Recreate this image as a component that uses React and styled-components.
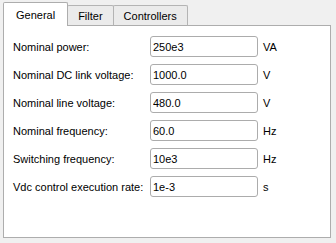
import React from 'react';
import styled, { createGlobalStyle } from 'styled-components';

const Global = createGlobalStyle`
  body {
    margin: 0;
    background: #f0f0f0;
    font-family: "Liberation Sans", Arial, sans-serif;
    font-size: 11px;
    color: #000;
  }
`;

const Page = styled.div`
  width: 336px;
  height: 243px;
  box-sizing: border-box;
  padding: 2px 5px 0 3px;
  display: flex;
  flex-direction: column;
`;

const TabBar = styled.div`
  display: flex;
  align-items: flex-end;
  height: 24px;
  margin-bottom: -1px;
  position: relative;
  z-index: 1;
`;

const Tab = styled.div`
  box-sizing: border-box;
  height: ${p => (p.$active ? '24px' : '21px')};
  padding: 0 ${p => (p.$active ? '12px' : '10px')};
  margin-left: ${p => (p.$first ? '0' : '-1px')};
  display: flex;
  align-items: center;
  border: 1px solid ${p => (p.$active ? '#adadad' : '#b4b4b4')};
  border-bottom: ${p => (p.$active ? 'none' : '1px solid #adadad')};
  border-radius: 2px 2px 0 0;
  background: ${p => (p.$active ? '#fff' : '#ebebeb')};
  padding-top: ${p => (p.$active ? '0' : '1px')};
  position: relative;
  z-index: ${p => (p.$active ? 2 : 1)};
`;

const Panel = styled.div`
  box-sizing: border-box;
  width: 328px;
  height: 213px;
  border: 1px solid #adadad;
  background: #fff;
  padding: 10px 0 0 9px;
  display: flex;
  flex-direction: column;
  gap: 7px;
`;

const Row = styled.div`
  display: grid;
  grid-template-columns: 137px 108px auto;
  align-items: center;
  height: 21px;
`;

const Label = styled.span`
  white-space: nowrap;
`;

const Field = styled.input`
  box-sizing: border-box;
  width: 108px;
  height: 21px;
  border: 1px solid #acacac;
  border-radius: 3px;
  background: #fff;
  padding: 0 2px;
  font: inherit;
  color: #000;
  outline: none;
`;

const Unit = styled.span`
  padding-left: 5px;
`;

const rows = [
  ['Nominal power:', '250e3', 'VA'],
  ['Nominal DC link voltage:', '1000.0', 'V'],
  ['Nominal line voltage:', '480.0', 'V'],
  ['Nominal frequency:', '60.0', 'Hz'],
  ['Switching frequency:', '10e3', 'Hz'],
  ['Vdc control execution rate:', '1e-3', 's'],
];

export default function App() {
  return (
    <>
      <Global />
      <Page>
        <TabBar>
          <Tab $active $first>General</Tab>
          <Tab>Filter</Tab>
          <Tab>Controllers</Tab>
        </TabBar>
        <Panel>
          {rows.map(([label, value, unit]) => (
            <Row key={label}>
              <Label>{label}</Label>
              <Field defaultValue={value} />
              <Unit>{unit}</Unit>
            </Row>
          ))}
        </Panel>
      </Page>
    </>
  );
}
